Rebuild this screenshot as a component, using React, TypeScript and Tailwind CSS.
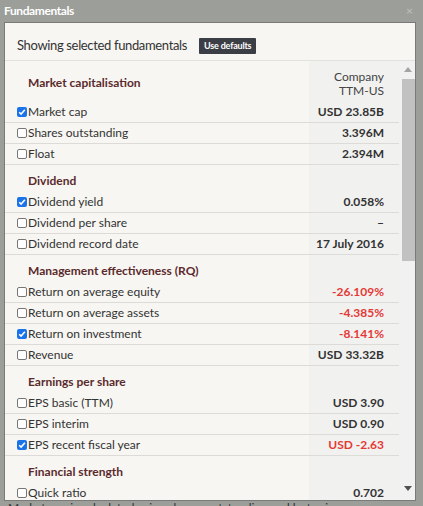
import React from "react";

type Row =
  | { kind: "section"; label: string }
  | { kind: "item"; label: string; value: string; checked?: boolean; negative?: boolean };

const rows: Row[] = [
  { kind: "item", label: "Market cap", value: "USD 23.85B", checked: true },
  { kind: "item", label: "Shares outstanding", value: "3.396M" },
  { kind: "item", label: "Float", value: "2.394M" },
  { kind: "section", label: "Dividend" },
  { kind: "item", label: "Dividend yield", value: "0.058%", checked: true },
  { kind: "item", label: "Dividend per share", value: "–" },
  { kind: "item", label: "Dividend record date", value: "17 July 2016" },
  { kind: "section", label: "Management effectiveness (RQ)" },
  { kind: "item", label: "Return on average equity", value: "-26.109%", negative: true },
  { kind: "item", label: "Return on average assets", value: "-4.385%", negative: true },
  { kind: "item", label: "Return on investment", value: "-8.141%", checked: true, negative: true },
  { kind: "item", label: "Revenue", value: "USD 33.32B" },
  { kind: "section", label: "Earnings per share" },
  { kind: "item", label: "EPS basic (TTM)", value: "USD 3.90" },
  { kind: "item", label: "EPS interim", value: "USD 0.90" },
  { kind: "item", label: "EPS recent fiscal year", value: "USD -2.63", checked: true, negative: true },
  { kind: "section", label: "Financial strength" },
  { kind: "item", label: "Quick ratio", value: "0.702" },
];

function Checkbox({ checked }: { checked?: boolean }) {
  if (checked) {
    return (
      <span className="flex h-[10px] w-[10px] shrink-0 items-center justify-center rounded-[2px] bg-[#1a73e8]">
        <svg viewBox="0 0 10 10" className="h-[10px] w-[10px]">
          <path d="M2.2 5.2 L4.1 7.1 L7.9 2.8" fill="none" stroke="#fff" strokeWidth="1.6" />
        </svg>
      </span>
    );
  }
  return (
    <span className="h-[10px] w-[10px] shrink-0 rounded-[2px] border border-[#767676] bg-white" />
  );
}

export default function App() {
  return (
    <div
      className="relative h-[506px] w-[423px] overflow-hidden bg-[#9c9e9a]"
      style={{ fontFamily: "Lato, 'Liberation Sans', sans-serif" }}
    >
      <div className="flex h-[22px] items-center justify-between pl-[4px] pr-[10px]">
        <span className="text-[12px] font-bold tracking-[-0.4px] text-white">Fundamentals</span>
        <span className="text-[12px] font-bold text-[#b8bab6]">×</span>
      </div>

      <div className="ml-[4px] flex h-[479px] w-[412px] flex-col border border-[#7a7a7a] bg-[#f7f6f2]">
        <div className="flex h-[38px] shrink-0 items-center gap-[12px] border-b border-[#e2e1dd] pl-[12px] pt-[8px]">
          <span className="text-[13px] tracking-[-0.35px] text-[#333]">Showing selected fundamentals</span>
          <span className="rounded-[1px] bg-[#3b3e44] px-[5px] py-[3px] text-[9px] font-bold leading-[10px] tracking-[-0.2px] text-white">
            Use defaults
          </span>
        </div>

        <div className="flex min-h-0 flex-1">
          <div className="min-w-0 flex-1 overflow-hidden">
            <div className="flex">
              <div className="flex-1 pl-[23px] pt-[15px] text-[12px] font-bold leading-[14px] text-[#5b2a2c]">
                Market capitalisation
              </div>
              <div className="w-[90px] bg-[#f1f1f0] pb-[4px] pr-[15px] pt-[9px] text-right text-[12px] leading-[14px] text-[#444]">
                Company
                <br />
                TTM-US
              </div>
            </div>
            {rows.map((r, i) =>
              r.kind === "section" ? (
                <div key={i} className="flex h-[27px]">
                  <div className="flex-1 pl-[23px] pt-[9px] text-[12px] font-bold leading-[14px] text-[#5b2a2c]">
                    {r.label}
                  </div>
                  <div className="w-[90px] bg-[#f1f1f0]" />
                </div>
              ) : (
                <div key={i} className="flex h-[21px] border-b border-[#dcdbd7]">
                  <div className="flex flex-1 items-center gap-[1px] pl-[12px] text-[12px] text-[#333]">
                    <Checkbox checked={r.checked} />
                    <span>{r.label}</span>
                  </div>
                  <div
                    className={
                      "flex w-[90px] items-center justify-end bg-[#f1f1f0] pr-[15px] text-[12px] font-bold " +
                      (r.negative ? "text-[#e53935]" : "text-[#333]")
                    }
                  >
                    {r.value}
                  </div>
                </div>
              )
            )}
          </div>

          <div className="flex w-[16px] shrink-0 flex-col items-center bg-[#f1f1f1] pl-[2px]">
            <svg viewBox="0 0 8 5" className="mt-[6px] h-[5px] w-[8px]">
              <path d="M0 5 L4 0 L8 5 Z" fill="#a3a3a3" />
            </svg>
            <div className="mt-[7px] h-[182px] w-[13px] bg-[#c1c1c1]" />
            <div className="flex-1" />
            <svg viewBox="0 0 8 5" className="mb-[9px] h-[5px] w-[8px]">
              <path d="M0 0 L8 0 L4 5 Z" fill="#505050" />
            </svg>
          </div>
        </div>
      </div>

      <div className="h-[5px] overflow-hidden pl-[8px] text-[12px] leading-[14px] text-[#333]">
        Market cap is calculated using shares outstanding and last price.
      </div>
    </div>
  );
}
